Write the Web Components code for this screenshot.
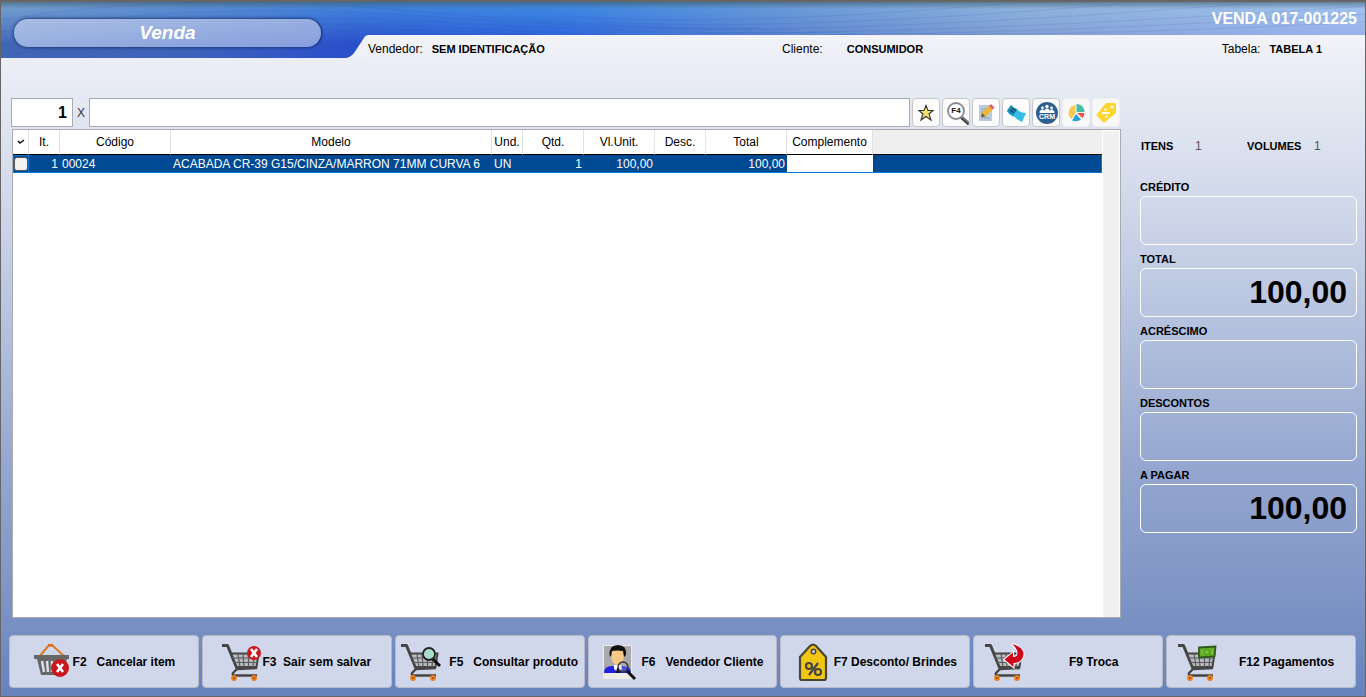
<!DOCTYPE html>
<html lang="pt-BR">
<head>
<meta charset="utf-8">
<title>Venda</title>
<style>
html, body { margin: 0; min-height: 100%; }
body { font-family: "Liberation Sans", Arial, sans-serif; font-size: 12px; color: #000; }
</style>
</head>
<body>
<pos-app></pos-app>
<script>
const define = (name, html, setup) => {
  const tpl = document.createElement('template');
  tpl.innerHTML = html;
  customElements.define(name, class extends HTMLElement {
    constructor() {
      super();
      this.attachShadow({ mode: 'open' }).append(tpl.content.cloneNode(true));
    }
    connectedCallback() { if (setup) setup(this, this.shadowRoot); }
  });
};

/* ---------- icons ---------- */
const cart = `<g transform="translate(-1 0)">
  <path d="M1 3.500h5.500l9.500 23" fill="none" stroke="#454545" stroke-width="3" stroke-linejoin="round"/>
  <path d="M10 11.500h27.500l-2 13.500h-20z" fill="#b9bac0" stroke="#454545" stroke-width="2"/>
  <path d="M11 16h26M12.500 20.500h24M17 12l2 13M22 12l1 13M27.500 12v13M33 12l-1 13" stroke="#5a5a5a" stroke-width="1.200" fill="none"/>
  <path d="M36 26l-20 1-4 4q-1 2.500 2 2.500h22" stroke="#454545" stroke-width="2.400" fill="none" stroke-linejoin="round"/>
  <circle cx="13" cy="36" r="2.900" fill="#f47b14"/><circle cx="33" cy="36" r="2.900" fill="#f47b14"/>
  <circle cx="13" cy="36" r="1" fill="#8a5a3a"/><circle cx="33" cy="36" r="1" fill="#8a5a3a"/></g>`;
const cross = (x, y, r) => `<circle cx="${x}" cy="${y}" r="${r}" fill="#c8181e"/>
  <path d="M${x - 3} ${y - 4}l6 8M${x + 3} ${y - 4}l-6 8" stroke="#fff" stroke-width="2.600"/>`;
const icons = {
  basket: [40, `<path d="M6 15L16 3h3l13 12" fill="none" stroke="#e07820" stroke-width="2"/>
    <rect x="15" y="2" width="5" height="2.500" fill="#d86a18"/>
    <path d="M1 13h35v4h-2l-5 16H8L4 17H1z" fill="#676767"/>
    <path d="M9 19l2 11M14 19l1 11M19 19v11M24 19l-1 11" stroke="#dde0ea" stroke-width="2.400"/>${cross(27, 26, 9)}`],
  cartExit: [40, cart + cross(32, 11, 7)],
  cartFind: [40, cart + `<path d="M32 17l7 7" stroke="#111" stroke-width="3"/>
    <circle cx="28" cy="12" r="6" fill="#a9dcc9" stroke="#222" stroke-width="1.800"/>`],
  cartSwap: [40, cart + `<path d="M27 2Q39 5 38.500 13 37 21 28.500 21v4L19.500 17.500 28 10.500V15Q33 15 32.500 10.500 32 6 27 2z" fill="#fff" stroke="#fff" stroke-width="2"/>
    <path d="M27 2Q39 5 38.500 13 37 21 28.500 21v4L19.500 17.500 28 10.500V15Q33 15 32.500 10.500 32 6 27 2z" fill="#d0021b"/>`],
  cartPay: [40, cart + `<path d="M21 5.500l16.500-1-1 10-15.500 1z" fill="#62ad22" stroke="#2f5a1a" stroke-width="1.800"/>
    <circle cx="29" cy="10" r="2.500" fill="#7cc63a" stroke="#4c8f1e"/>
    <path d="M23.500 8l2 2-2 2M35 8l-1.500 2 1.500 2" fill="none" stroke="#8fd054"/>`],
  person: [40, `<rect x="2" y="3" width="29" height="34" fill="#eeede8"/><rect x="3" y="4" width="27" height="27" fill="#a9aaa8"/>
    <path d="M3 31q0-7 8-7l5 1 6-1q8 0 8 7z" fill="#2020e6"/><path d="M13 23h7l1 4-4 3-4-3z" fill="#fff"/>
    <path d="M16 26h2l1 5h-4z" fill="#111"/><ellipse cx="16.500" cy="14" rx="6.500" ry="9" fill="#f6c887"/>
    <path d="M8.500 13Q8 3 17 3q9 0 8 10l-2 2-1-6q-6-1-11 0l-1 6z" fill="#111"/>
    <circle cx="22" cy="25" r="5" fill="#bbb" fill-opacity=".3" stroke="#333" stroke-width="1.400"/>
    <path d="M26 29l8 8" stroke="#111" stroke-width="3"/>`],
  discount: [40, `<g transform="translate(1 0)"><path d="M5 15L15 4q3-3 6 0l10 11v21q0 2-2 2H7q-2 0-2-2z" fill="#f2c713" stroke="#4a4636" stroke-width="2.200"/>
    <circle cx="18.500" cy="9.500" r="2.200" fill="#d0d7ea" stroke="#444" stroke-width="1.400"/>
    <circle cx="14" cy="24" r="3" fill="none" stroke="#444" stroke-width="2.200"/><circle cx="23" cy="30" r="3" fill="none" stroke="#444" stroke-width="2.200"/>
    <path d="M23 21L14 33" stroke="#444" stroke-width="2.200"/></g>`],
  star: [28, `<path d="M13 6.500l2 5h5l-4 3.500 2 6-5-3.500-5 3.500 2-6-4-3.500h5z" fill="#f6e06d" stroke="#353535" stroke-width="1.100"/>`],
  find: [28, `<path d="M18 18l8 7" stroke="#444" stroke-width="3.500"/><path d="M19 18l7 6" stroke="#999" stroke-width="1"/>
    <circle cx="13" cy="12" r="8" fill="#fff" stroke="#8a8a8a" stroke-width="1.800"/>
    <text x="13" y="14" text-anchor="middle" font-family="Liberation Sans" font-weight="bold" font-size="8" fill="#111">F4</text>`],
  edit: [28, `<path d="M6 6h13v16H6z" fill="#b9cbd8"/><path d="M8 10h6M8 13h5M8 16h4M8 19h9" stroke="#8ba4b5"/>
    <path d="M8 18l1-4 8-8 3.500 3.500-8 8z" fill="#f2b52a"/><path d="M16 7l2-2 3.500 3.500-2 2z" fill="#df606c"/><path d="M8 18l1-4 3.500 3.500z" fill="#6b5638"/>`],
  ticket: [28, `<path d="M8 6q2 3 6 4 3 4 9 4l-4 9q-5-2-7-5-5-1-8-6z" fill="#35bde8"/>
    <path d="M8 6q2 3 6 4l-4 7Q6 15 4 12z" fill="#1790bd"/><path d="M7 11l4 3M9 9l4 3" stroke="#15445a" stroke-width="1.500"/>`],
  crm: [28, `<circle cx="14" cy="14" r="11" fill="#2d6090"/><circle cx="14" cy="7.500" r="1.700" fill="#fff"/>
    <circle cx="9.500" cy="9" r="1.400" fill="#fff"/><circle cx="18.500" cy="9" r="1.400" fill="#fff"/>
    <path d="M6.500 14q0-3.500 3-3.500l2 1q.500-2 2.500-2t2.500 2l2-1q3 0 3 3.500z" fill="#fff"/>
    <text x="14" y="20" text-anchor="middle" font-family="Liberation Sans" font-weight="bold" font-size="7" fill="#fff">CRM</text>`],
  pie: [28, `<path d="M12.500 14V6a8 8 0 0 0-4 14z" fill="#fbc850"/><path d="M13.500 13V5a8 8 0 0 1 8 8z" fill="#47bda1"/>
    <path d="M14 14h7.500a8 8 0 0 1-2 5z" fill="#e8544e"/><path d="M13 15l5 5.500q-4 3-9 1z" fill="#2aa3dc"/>`],
  tag: [28, `<path d="M13 4h9q1 0 1 1v9L12 23q-1 1-2 0l-6-6q-1-1 0-2z" fill="#fdd62b"/>
    <circle cx="19" cy="8" r="1.500" fill="#fff"/><path d="M9 14h8" stroke="#fff" stroke-width="1.800"/>
    <circle cx="12.500" cy="10.500" r="1.200" fill="#fff"/><circle cx="13.500" cy="17.500" r="1.200" fill="#fff"/>`],
};

define('pos-icon', `<style>:host{display:block;flex:none;line-height:0}</style><span aria-hidden="true"></span>`, (el, root) => {
  const [size, art] = icons[el.getAttribute('name')];
  root.querySelector('span').innerHTML = `<svg width="${size}" height="${size}" viewBox="0 0 ${size} ${size}">${art}</svg>`;
});

/* ---------- header ---------- */
define('pos-header', `
<style>
:host { display: grid; grid-template-columns: 332px 1fr; grid-template-rows: 33px 23px; position: relative;
  background: linear-gradient(to right, #7aa6d4 0, #5d93d6 14%, #4189e0 28%, #418fe4 42%, #6c9fda 58%, #8fb6de 75%, #a0c5ef); }
.depth, .waves { position: absolute; inset: 0; width: 100%; height: 100%; }
.depth { background: linear-gradient(to right, #4166b4 0, #3d62bb 14%, #2a4ecb 26%, #2b5bd8 41%, #5c80cc 59%, #7e99d0 75%, #9aaeea);
  -webkit-mask-image: linear-gradient(transparent, #000 75%); mask-image: linear-gradient(transparent, #000 75%); }
.shade { position: absolute; inset: 0 0 auto; height: 7px; background: linear-gradient(rgba(60,85,100,.6), rgba(60,85,100,0)); }
h1 { grid-row: 1 / 3; position: relative; margin: 17px 12px 11px 13px; border-radius: 14px; box-sizing: border-box;
  display: flex; align-items: center; justify-content: center; font-size: 19px; font-style: italic; color: #fff;
  background: linear-gradient(175deg, #a9bee3, #869edd); box-shadow: 0 0 3px 1px rgba(20,45,100,.7), 1px 0 1px rgba(20,40,90,.7); }
.number { grid-column: 2; position: relative; justify-self: end; margin-right: 8px; align-self: center; font-size: 16px; font-weight: bold; line-height: 18px; color: #fff; }
.info { grid-column: 2; position: relative; display: flex; min-width: 0; }
.info svg { flex: none; display: block; }
.fields { flex: 1; display: grid; grid-template-columns: 414px 1fr auto; background: linear-gradient(#f3f4f9, #eeeff6); padding-right: 43px; align-items: center; line-height: 16px; padding-top: 4px; }
p { margin: 0; white-space: nowrap; display: flex; gap: 9px; }
p.wide { gap: 24px; }
b { font-size: 11px; }
</style>
<div class="depth"></div>
<svg class="waves" viewBox="0 0 1364 56" preserveAspectRatio="none" aria-hidden="true">
  <g fill="none" stroke="#2450a8" stroke-opacity=".13">
    <path d="M0 18Q180-12 400 8T760 26M0 30Q190-2 420 14T800 28M0 42Q200 6 440 20T840 30M0 54Q220 12 460 26T860 32M80 56Q260 18 500 31T900 33"/>
    <path d="M560 14Q720 26 1000 2M600 20Q780 30 1120 2M640 26Q860 32 1240 2M700 31Q960 32 1364 4M800 33Q1040 32 1364 12M920 33Q1140 32 1364 20"/>
  </g>
</svg>
<div class="shade"></div>
<h1>Venda</h1>
<div class="number">VENDA 017-001225</div>
<div class="info">
  <svg width="35" height="23" viewBox="0 0 35 23" aria-hidden="true"><path d="M12 23Q17 23 21 18L29 6Q32 0 35 0V23Z" fill="#f0f1f7"/></svg>
  <div class="fields">
    <p><span>Vendedor:</span><b>SEM IDENTIFICAÇÃO</b></p>
    <p class="wide"><span>Cliente:</span><b>CONSUMIDOR</b></p>
    <p><span>Tabela:</span><b>TABELA 1</b></p>
  </div>
</div>`);

/* ---------- product entry ---------- */
define('tool-button', `
<style>
:host { display: block; }
button { display: grid; place-items: center; width: 28px; height: 29px; padding: 0; border: 1px solid #c6c6c9; border-radius: 4px; background: #fcfcfc; overflow: hidden; }
:host([flat]) button { border-color: #f0f0f2; background: #f8f8f9; }
</style>
<button type="button"><slot></slot></button>`, (el, root) => root.querySelector('button').setAttribute('aria-label', el.getAttribute('label')));

define('product-entry', `
<style>
:host { display: flex; align-items: center; margin-right: 1px; }
input { box-sizing: border-box; height: 29px; border: 1px solid #a9abb3; background: #fff; font: 12px "Liberation Sans", Arial, sans-serif; padding: 0 5px; outline: 0; border-radius: 0; }
.qty { width: 62px; font-size: 16px; font-weight: bold; text-align: right; }
label { width: 16px; text-align: center; color: #333; }
.code { flex: 1; min-width: 0; }
.tools { display: flex; gap: 2px; margin-left: 2px; }
</style>
<input class="qty" id="qty" value="1" aria-label="Quantidade">
<label for="code">X</label>
<input class="code" id="code">
<div class="tools">
  <tool-button label="Favoritos"><pos-icon name="star"></pos-icon></tool-button>
  <tool-button label="Pesquisar"><pos-icon name="find"></pos-icon></tool-button>
  <tool-button label="Editar"><pos-icon name="edit"></pos-icon></tool-button>
  <tool-button label="Vale"><pos-icon name="ticket"></pos-icon></tool-button>
  <tool-button label="CRM"><pos-icon name="crm"></pos-icon></tool-button>
  <tool-button label="Relatório" flat><pos-icon name="pie"></pos-icon></tool-button>
  <tool-button label="Promoções" flat><pos-icon name="tag"></pos-icon></tool-button>
</div>`);

/* ---------- items table ---------- */
define('items-table', `
<style>
:host { display: flex; background: #fff; border: 1px solid #a9abb3; box-sizing: border-box; min-width: 0; }
.body { flex: 1; min-width: 0; overflow: hidden; }
.bar { width: 16px; background: #f0f0f0; margin: 1px 1px 0; }
table { width: 100%; table-layout: fixed; border-collapse: separate; border-spacing: 0; line-height: 14px; }
th, td { box-sizing: border-box; padding: 0 2px; white-space: nowrap; overflow: hidden; }
th { height: 25px; font-weight: normal; text-align: center; border-right: 1px solid #e2e2e2; border-bottom: 1px solid #000; }
th:last-child { background: #efefef; border-right: 0; }
td { height: 18px; background: #004a94; color: #fff; border-bottom: 1px solid #0078d7; }
td.num { text-align: right; }
td.pick { padding: 0; border: 1px solid #0078d7; }
td.empty { background: #fff; }
td:last-child { border-right: 1px solid #0078d7; }
input { appearance: none; display: block; margin: 0; width: 14px; height: 14px; box-sizing: border-box; border: 1px solid #555; border-radius: 3px; background: #f3f3f3; }
svg { display: block; margin: 0 auto; }
</style>
<div class="body">
<table>
  <colgroup><col style="width:16px"><col style="width:31px"><col style="width:111px"><col style="width:321px"><col style="width:31px"><col style="width:61px"><col style="width:71px"><col style="width:51px"><col style="width:81px"><col style="width:86px"><col></colgroup>
  <thead><tr>
    <th aria-label="Selecionar"><svg width="8" height="6" viewBox="0 0 8 6"><path d="M1 2l2 2L7 1" fill="none" stroke="#111" stroke-width="1.500"/></svg></th>
    <th>It.</th><th>Código</th><th>Modelo</th><th>Und.</th><th>Qtd.</th><th>Vl.Unit.</th><th>Desc.</th><th>Total</th><th>Complemento</th><th></th>
  </tr></thead>
  <tbody><tr>
    <td class="pick"><input type="checkbox" aria-label="Selecionar item 1"></td>
    <td class="num">1</td><td>00024</td><td>ACABADA CR-39 G15/CINZA/MARRON 71MM CURVA 6</td><td>UN</td>
    <td class="num">1</td><td class="num">100,00</td><td></td><td class="num">100,00</td><td class="empty"></td><td></td>
  </tr></tbody>
</table>
</div>
<div class="bar"></div>`);

/* ---------- totals ---------- */
define('total-box', `
<style>
:host { display: block; }
label { display: block; font-size: 11px; font-weight: bold; line-height: 16px; padding-bottom: 1px; }
output { display: flex; align-items: center; justify-content: flex-end; box-sizing: border-box; height: 49px; padding: 0 9px 2px; border: 1px solid #fff; border-radius: 6px; font-size: 32px; font-weight: bold; line-height: 36px; }
</style>
<label for="v"></label><output id="v"><slot></slot></output>`, (el, root) => root.querySelector('label').textContent = el.getAttribute('label'));

define('sale-summary', `
<style>
:host { display: flex; flex-direction: column; gap: 6px; }
.counts { display: grid; grid-template-columns: 54px 52px 67px auto; justify-content: start; line-height: 16px; margin-bottom: 19px; padding-left: 1px; }
b { font-size: 11px; }
span { color: #555; }
</style>
<div class="counts"><b>ITENS</b><span>1</span><b>VOLUMES</b><span>1</span></div>
<total-box label="CRÉDITO"></total-box>
<total-box label="TOTAL">100,00</total-box>
<total-box label="ACRÉSCIMO"></total-box>
<total-box label="DESCONTOS"></total-box>
<total-box label="A PAGAR">100,00</total-box>`);

/* ---------- function keys ---------- */
define('key-button', `
<style>
:host { display: block; min-width: 0; }
button { width: 100%; height: 53px; display: flex; align-items: center; justify-content: center; padding: 0; border: 1px solid #b7b9c6; border-radius: 4px; background: #d0d7ea; color: #000; font: bold 12px "Liberation Sans", Arial, sans-serif; white-space: pre; }
.icon { flex: none; line-height: 0; }
:host([lead]) button { justify-content: flex-start; padding-left: 11px; }
:host([lead]) .text { flex: 1; text-align: center; }
:host([spaced]) button { gap: 8px; }
</style>
<button type="button"><span class="icon" aria-hidden="true"></span><span class="text"><slot></slot></span></button>`, (el, root) => {
  const [size, art] = icons[el.getAttribute('icon')];
  root.querySelector('.icon').innerHTML = `<svg width="${size}" height="${size}" viewBox="0 0 ${size} ${size}">${art}</svg>`;
});

define('key-bar', `
<style>:host { display: grid; grid-template-columns: repeat(7, 1fr); gap: 3px; padding: 17px 9px 8px 8px; }</style>
<key-button icon="basket">F2   Cancelar item</key-button>
<key-button icon="cartExit">F3  Sair sem salvar</key-button>
<key-button icon="cartFind" spaced>F5   Consultar produto</key-button>
<key-button icon="person">F6   Vendedor Cliente</key-button>
<key-button icon="discount">F7 Desconto/ Brindes</key-button>
<key-button icon="cartSwap" lead>F9 Troca</key-button>
<key-button icon="cartPay" lead>F12 Pagamentos</key-button>`);

define('pos-app', `
<style>
:host { display: grid; grid-template-rows: auto 1fr auto; min-height: 100vh; box-sizing: border-box; border: 1px solid #666; border-top-width: 2px;
  background: linear-gradient(#f5f6fa 0, #e5e9f3 14%, #d3daeb 27%, #b9c5e0 44%, #96a8d0 66%, #7e94c5 86%, #6783bc); }
main { display: grid; grid-template-columns: minmax(0, 1fr) 217px; column-gap: 19px; padding: 40px 8px 0 10px; }
.sale { display: grid; grid-template-rows: auto 1fr; gap: 2px; }
items-table { margin-left: 1px; }
sale-summary { margin-top: 40px; }
</style>
<pos-header></pos-header>
<main>
  <section class="sale"><product-entry></product-entry><items-table></items-table></section>
  <sale-summary></sale-summary>
</main>
<key-bar></key-bar>`);
</script>
</body>
</html>
